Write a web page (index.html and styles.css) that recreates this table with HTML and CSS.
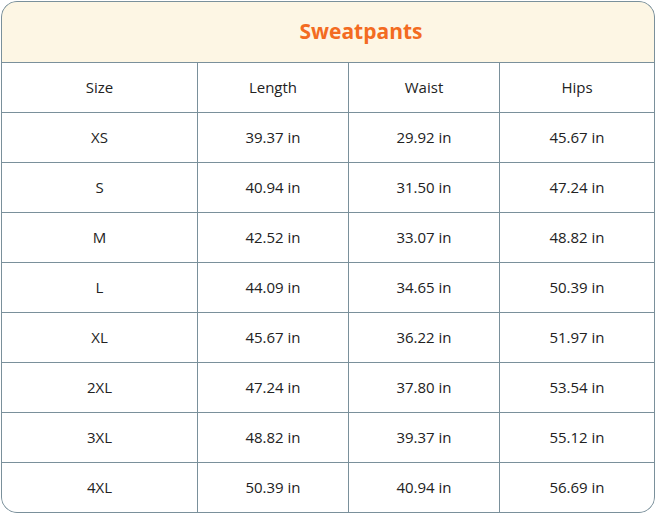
FILE: index.html
```html
<!DOCTYPE html>
<html>
<head>
<meta charset="utf-8">
<link rel="stylesheet" href="styles.css">
</head>
<body>
<div class="chart">
  <div class="title">Sweatpants</div>
  <div class="cell">Size</div><div class="cell">Length</div><div class="cell">Waist</div><div class="cell">Hips</div>
  <div class="cell">XS</div><div class="cell">39.37 in</div><div class="cell">29.92 in</div><div class="cell">45.67 in</div>
  <div class="cell">S</div><div class="cell">40.94 in</div><div class="cell">31.50 in</div><div class="cell">47.24 in</div>
  <div class="cell">M</div><div class="cell">42.52 in</div><div class="cell">33.07 in</div><div class="cell">48.82 in</div>
  <div class="cell">L</div><div class="cell">44.09 in</div><div class="cell">34.65 in</div><div class="cell">50.39 in</div>
  <div class="cell">XL</div><div class="cell">45.67 in</div><div class="cell">36.22 in</div><div class="cell">51.97 in</div>
  <div class="cell">2XL</div><div class="cell">47.24 in</div><div class="cell">37.80 in</div><div class="cell">53.54 in</div>
  <div class="cell">3XL</div><div class="cell">48.82 in</div><div class="cell">39.37 in</div><div class="cell">55.12 in</div>
  <div class="cell">4XL</div><div class="cell">50.39 in</div><div class="cell">40.94 in</div><div class="cell">56.69 in</div>
</div>
</body>
</html>
```
FILE: styles.css
```css
html, body {
  margin: 0;
  padding: 0;
  background: #ffffff;
}
body {
  padding: 1px;
  font-family: "Open Sans", "Noto Sans", sans-serif;
}
.chart {
  width: 652px;
  border: 1px solid #7a909b;
  border-radius: 16px;
  overflow: hidden;
  display: grid;
  grid-template-columns: 195px 150px 150px 1fr;
  grid-auto-rows: 49px;
  grid-template-rows: 60px;
  gap: 1px;
  background: #7a909b;
}
.title {
  grid-column: 1 / -1;
  background: #fdf6e4;
  color: #f36b21;
  font-weight: 700;
  font-size: 21px;
  padding-left: 66px;
  padding-bottom: 2px;
  display: flex;
  align-items: center;
  justify-content: center;
}
.cell {
  background: #ffffff;
  color: #222222;
  font-size: 15px;
  padding-bottom: 2px;
  display: flex;
  align-items: center;
  justify-content: center;
}
```
